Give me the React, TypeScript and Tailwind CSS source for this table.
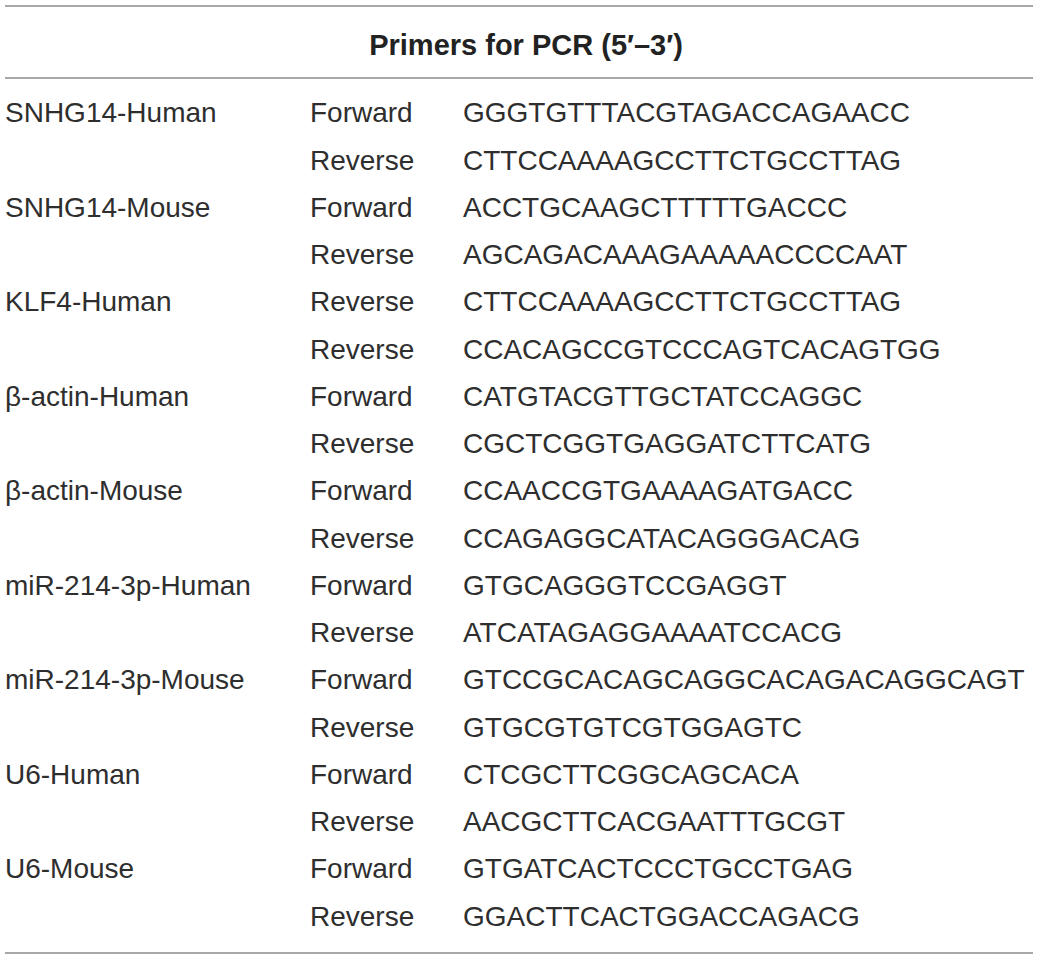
const ROWS: [string, string, string][] = [
  ["SNHG14-Human", "Forward", "GGGTGTTTACGTAGACCAGAACC"],
  ["", "Reverse", "CTTCCAAAAGCCTTCTGCCTTAG"],
  ["SNHG14-Mouse", "Forward", "ACCTGCAAGCTTTTTGACCC"],
  ["", "Reverse", "AGCAGACAAAGAAAAACCCCAAT"],
  ["KLF4-Human", "Reverse", "CTTCCAAAAGCCTTCTGCCTTAG"],
  ["", "Reverse", "CCACAGCCGTCCCAGTCACAGTGG"],
  ["β-actin-Human", "Forward", "CATGTACGTTGCTATCCAGGC"],
  ["", "Reverse", "CGCTCGGTGAGGATCTTCATG"],
  ["β-actin-Mouse", "Forward", "CCAACCGTGAAAAGATGACC"],
  ["", "Reverse", "CCAGAGGCATACAGGGACAG"],
  ["miR-214-3p-Human", "Forward", "GTGCAGGGTCCGAGGT"],
  ["", "Reverse", "ATCATAGAGGAAAATCCACG"],
  ["miR-214-3p-Mouse", "Forward", "GTCCGCACAGCAGGCACAGACAGGCAGT"],
  ["", "Reverse", "GTGCGTGTCGTGGAGTC"],
  ["U6-Human", "Forward", "CTCGCTTCGGCAGCACA"],
  ["", "Reverse", "AACGCTTCACGAATTTGCGT"],
  ["U6-Mouse", "Forward", "GTGATCACTCCCTGCCTGAG"],
  ["", "Reverse", "GGACTTCACTGGACCAGACG"],
];

export default function App() {
  return (
    <div className="w-[1039px] h-[958px] bg-white pt-[5px] px-[5px] text-[#2e2e2e] font-['Liberation_Sans',Arial,sans-serif] text-[28px]">
      <div className="w-[1028px]">
        <div className="h-[2px] bg-[#a8a8a8]" />
        <div className="pt-[15px] pb-[8px] pl-[14px] text-center font-bold text-[29px] text-[#222] leading-[47.25px]">
          Primers for PCR (5′–3′)
        </div>
        <div className="h-[2px] bg-[#a8a8a8]" />
        <div className="pt-[10px] pb-[12px]">
          {ROWS.map(([name, dir, seq], i) => (
            <div key={i} className="grid grid-cols-[305px_153px_1fr] leading-[47.25px] whitespace-nowrap">
              <div>{name}</div>
              <div>{dir}</div>
              <div>{seq}</div>
            </div>
          ))}
        </div>
        <div className="h-[2px] bg-[#a8a8a8]" />
      </div>
    </div>
  );
}
